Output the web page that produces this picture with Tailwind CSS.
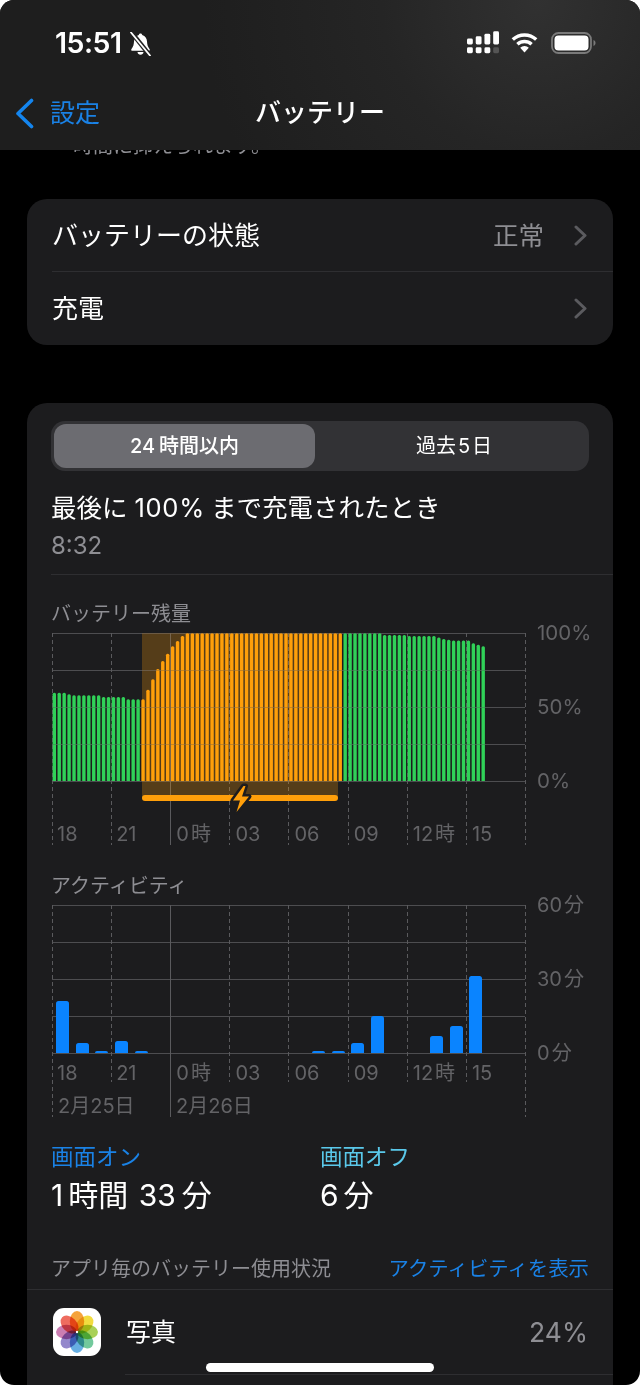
<!DOCTYPE html>
<html lang="ja">
<head>
    <meta charset="UTF-8">
    <meta name="viewport" content="width=device-width, initial-scale=1.0">
    <title>バッテリー</title>
    <script src="https://cdn.jsdelivr.net/npm/@tailwindcss/browser@4"></script>
</head>
<body class="bg-white">
<div class="relative h-[1385px] w-[640px] overflow-hidden rounded-[14px] bg-black text-white font-['Inter','Noto_Sans_CJK_JP',sans-serif]">

    <!-- ステータスバーとナビ -->
    <header class="h-[150px] bg-[radial-gradient(circle_at_84%_0%,#313131_0%,#252525_28%,#1e1e1e_60%,#1e1e1e_100%)]">
        <div class="flex h-[86px] items-start justify-between pt-[26px] pl-[55px] pr-[44px]">
            <div class="flex items-center gap-[7px]">
                <span class="text-[28.500px] leading-[34px] font-semibold tracking-[-0.5px]">15:51</span>
                <svg width="23" height="24" viewBox="0 0 23 24" class="mt-[1px]">
                    <path d="M11.5 1.5c1 0 1.6.7 1.7 1.5 3.2.8 4.6 3.4 4.8 6.6.2 3.4.8 5.300 2.500 7.400.6.800.2 1.800-.9 1.800H3.400c-1.100 0-1.500-1-.9-1.800 1.700-2.100 2.300-4 2.500-7.400.2-3.200 1.600-5.800 4.800-6.600.1-.8.700-1.500 1.700-1.500z" fill="#fff"/>
                    <path d="M8.500 20h6c-.2 1.700-1.400 2.800-3 2.800s-2.800-1.100-3-2.800z" fill="#fff"/>
                    <path d="M3 1l17.500 22" stroke="#232323" stroke-width="4.500"/>
                    <path d="M2 .5l19 23" stroke="#fff" stroke-width="1.800" stroke-linecap="round"/>
                </svg>
            </div>
            <div class="flex items-center pt-[5px]">
                <svg width="32" height="23" viewBox="0 0 33 23" class="mr-[12px]">
                    <g fill="#fff">
                        <rect x="0" y="7.500" width="6" height="6" rx="1.500"/>
                        <rect x="9" y="5" width="6" height="8.500" rx="1.500"/>
                        <rect x="18" y="2.500" width="6" height="11" rx="1.500"/>
                        <rect x="27" y="0" width="6" height="13.500" rx="1.500"/>
                        <rect x="0" y="16.500" width="6" height="6" rx="1.500"/>
                        <rect x="9" y="16.500" width="6" height="6" rx="1.500"/>
                        <rect x="18" y="16.500" width="6" height="6" rx="1.500"/>
                    </g>
                    <rect x="27" y="16.500" width="6" height="6" rx="1.500" fill="#555"/>
                </svg>
                <svg width="27" height="21" viewBox="0 0 27 21" class="mr-[13px]">
                    <path d="M1.800 7.600A17 17 0 0 1 25.200 7.600" fill="none" stroke="#fff" stroke-width="3.400"/>
                    <path d="M6.400 12.200A10.500 10.500 0 0 1 20.600 12.200" fill="none" stroke="#fff" stroke-width="3.400"/>
                    <path d="M13.500 20.500L9.200 15.800A6 6 0 0 1 17.800 15.800Z" fill="#fff"/>
                </svg>
                <svg width="45" height="22" viewBox="0 0 45 22">
                    <rect x="1" y="1" width="39" height="20" rx="6.500" fill="none" stroke="#7a7a7a" stroke-width="1.800"/>
                    <rect x="3.500" y="3.500" width="34" height="15" rx="4" fill="#fff"/>
                    <path d="M42.500 8v6c1.200-.4 2-1.600 2-3s-.8-2.600-2-3z" fill="#7a7a7a"/>
                </svg>
            </div>
        </div>
        <div class="relative flex h-[54px] items-center justify-center">
            <div class="absolute left-[15px] top-[11px] flex items-center gap-[16px]">
                <svg width="19" height="31" viewBox="0 0 19 31">
                    <path d="M16.500 2.500L3 15.500l13.500 13" fill="none" stroke="#1485ee" stroke-width="3.600" stroke-linecap="round" stroke-linejoin="round"/>
                </svg>
                <span class="text-[25px] leading-[32px] text-[#1a82e6]">設定</span>
            </div>
            <h1 class="text-[26px] leading-[34px] font-medium">バッテリー</h1>
        </div>
    </header>

    <main class="px-[27px]">
        <div class="flex h-[6px] items-end overflow-hidden pl-[46px]">
            <p class="text-[20px] leading-[20px] whitespace-nowrap text-[#8e8e93]">時間に抑えられます。</p>
        </div>

        <!-- バッテリーの状態 -->
        <section class="mt-[43px] rounded-[20px] bg-[#1c1c1e] pl-[25px]">
            <div class="flex h-[72px] items-center justify-between pr-[26px] pt-[2px]">
                <span class="text-[26px] leading-[36px]">バッテリーの状態</span>
                <div class="flex items-center gap-[30px]">
                    <span class="text-[25.500px] leading-[36px] text-[#8e8e93]">正常</span>
                    <svg width="13" height="21" viewBox="0 0 13 21" class="-mt-[2px]"><path d="M2 2l9 8.500-9 8.500" fill="none" stroke="#5b5b5f" stroke-width="3" stroke-linecap="round" stroke-linejoin="round"/></svg>
                </div>
            </div>
            <div class="flex h-[74px] items-center justify-between border-t border-[#2e2e31] pr-[26px]">
                <span class="text-[26px] leading-[36px] pt-[1px]">充電</span>
                <svg width="13" height="21" viewBox="0 0 13 21"><path d="M2 2l9 8.500-9 8.500" fill="none" stroke="#5b5b5f" stroke-width="3" stroke-linecap="round" stroke-linejoin="round"/></svg>
            </div>
        </section>

        <!-- グラフ -->
        <section class="mt-[58px] rounded-t-[20px] bg-[#1c1c1e] px-[24px] pt-[18px] h-[1000px]">
            <div class="flex h-[50px] items-center rounded-[14px] bg-[#323235] p-[3px]">
                <div class="flex h-[44px] w-[261px] items-center justify-center rounded-[12px] bg-[#6c6c71] text-[20px] font-medium"><span>24<span class="ml-[4px]">時間以内</span></span></div>
                <div class="flex h-[44px] flex-1 items-center justify-center pl-[7px] text-[20px]"><span>過去<span class="mx-[2px]">5</span>日</span></div>
            </div>

            <p class="mt-[19px] h-[36px] text-[25.500px] leading-[36px] whitespace-nowrap">最後に<span class="ml-[7px] mr-[6px] tracking-[0.7px]">100%</span>まで充電されたとき</p>
            <p class="mt-[2px] h-[34px] text-[24px] leading-[36px] text-[#8e8e93]">8:32</p>
            <div class="mt-[12px] -mr-[24px] border-t border-[#2e2e31]"></div>

            <p class="mt-[24px] h-[28px] text-[20px] leading-[30px] text-[#8e8e93]">バッテリー残量</p>
            <div class="relative mt-[6px] ml-[1px] w-[474px]">
                <svg class="grid-lines absolute top-0 left-0" data-height="212" width="474" height="212"></svg>
                <div class="absolute left-[90px] top-0 h-[165px] w-[196px] bg-[#ff9f0a]/25"></div>
                <svg id="batteryBars" class="relative block" width="474" height="148"></svg>
                <svg class="grid-lines absolute top-0 left-0 opacity-30" data-height="148" width="474" height="148"></svg>
                <div class="absolute left-[90px] top-[162px] h-[6px] w-[196px] rounded-[3px] bg-[#ff9f0a]"></div>
                <svg class="absolute left-[176px] top-[150px]" width="26" height="32" viewBox="0 0 26 32">
                    <path d="M15.500 3L5 17.500h7L8.500 29 21 13.500h-7L17.500 3z" fill="#ff9f0a" stroke="#1c1c1e" stroke-width="5" stroke-linejoin="round" paint-order="stroke"/>
                </svg>
                <div class="absolute left-[485px] top-0 flex h-[148px] flex-col justify-between text-[20.500px] whitespace-nowrap text-[#636366]">
                    <span class="flex h-0 items-center">100%</span>
                    <span class="flex h-0 items-center">50%</span>
                    <span class="flex h-0 items-center">0%</span>
                </div>
                <div class="relative mt-[39px] grid h-[28px] w-[473px] grid-cols-8 text-[20px] leading-[28px] text-[#636366]">
                    <span class="pl-[5px]">18</span><span class="pl-[5px]">21</span><span class="pl-[6px]">0<span class="ml-[2px]">時</span></span><span class="pl-[6px]">03</span><span class="pl-[6px]">06</span><span class="pl-[6px]">09</span><span class="pl-[6px] whitespace-nowrap">12<span class="ml-[2px]">時</span></span><span class="pl-[6px]">15</span>
                </div>
            </div>

            <p class="mt-[23px] h-[28px] text-[20px] leading-[30px] text-[#8e8e93]">アクティビティ</p>
            <div class="relative mt-[6px] ml-[1px] w-[474px]">
                <svg class="grid-lines absolute top-0 left-0" data-height="212" data-long="1" width="474" height="212"></svg>
                <div class="relative flex h-[148px] items-end gap-[6.700px] pl-[4px]" id="activityBars"></div>
                <div class="absolute left-[485px] top-0 flex h-[148px] flex-col justify-between text-[20px] whitespace-nowrap text-[#636366]">
                    <span class="flex h-0 items-center">60<span class="ml-[2px]">分</span></span>
                    <span class="flex h-0 items-center">30<span class="ml-[2px]">分</span></span>
                    <span class="flex h-0 items-center">0<span class="ml-[2px]">分</span></span>
                </div>
                <div class="relative mt-[6px] grid h-[28px] w-[473px] grid-cols-8 text-[20px] leading-[28px] text-[#636366]">
                    <span class="pl-[5px]">18</span><span class="pl-[5px]">21</span><span class="pl-[6px]">0<span class="ml-[2px]">時</span></span><span class="pl-[6px]">03</span><span class="pl-[6px]">06</span><span class="pl-[6px]">09</span><span class="pl-[6px] whitespace-nowrap">12<span class="ml-[2px]">時</span></span><span class="pl-[6px]">15</span>
                </div>
                <div class="relative mt-[5px] flex h-[28px] text-[20px] leading-[28px] text-[#636366]">
                    <span class="w-[118px] pl-[6px]">2月25日</span><span class="pl-[6px]">2月26日</span>
                </div>
            </div>

            <!-- 画面オン/オフ -->
            <div class="mt-[21px] flex">
                <div class="w-[269px]">
                    <p class="h-[32px] text-[22.500px] leading-[32px] text-[#1a82e6]">画面オン</p>
                    <p class="mt-[2px] h-[40px] text-[30px] leading-[40px] whitespace-nowrap">1<span class="ml-[5px]">時間</span> <span class="ml-[2px] mr-[6px]">33</span>分</p>
                </div>
                <div>
                    <p class="h-[32px] text-[22.500px] leading-[32px] text-[#5ac8ea]">画面オフ</p>
                    <p class="mt-[2px] h-[40px] text-[30px] leading-[40px] whitespace-nowrap">6<span class="ml-[5px]">分</span></p>
                </div>
            </div>

            <div class="mt-[39px] flex h-[28px] items-center justify-between pt-[2px] text-[20px] leading-[28px]">
                <span class="text-[#8e8e93]">アプリ毎のバッテリー使用状況</span>
                <span class="text-[20.400px] text-[#1a82e6]">アクティビティを表示</span>
            </div>
            <div class="mt-[7px] -mx-[24px] border-t border-[#2e2e31]"></div>

            <div class="flex h-[84px] items-center">
                <div class="ml-[2px] flex h-[48px] w-[48px] flex-none items-center justify-center rounded-[11px] bg-white">
                    <svg width="42" height="42" viewBox="0 0 42 42">
                        <g class="isolate">
                            <ellipse cx="21" cy="10.500" rx="7.200" ry="10.500" fill="#f5a33b" class="mix-blend-multiply"/>
                            <ellipse cx="21" cy="10.500" rx="7.200" ry="10.500" fill="#f2dc3f" transform="rotate(45 21 21)" class="mix-blend-multiply"/>
                            <ellipse cx="21" cy="10.500" rx="7.200" ry="10.500" fill="#a9d158" transform="rotate(90 21 21)" class="mix-blend-multiply"/>
                            <ellipse cx="21" cy="10.500" rx="7.200" ry="10.500" fill="#72c99c" transform="rotate(135 21 21)" class="mix-blend-multiply"/>
                            <ellipse cx="21" cy="10.500" rx="7.200" ry="10.500" fill="#66aee2" transform="rotate(180 21 21)" class="mix-blend-multiply"/>
                            <ellipse cx="21" cy="10.500" rx="7.200" ry="10.500" fill="#9488cb" transform="rotate(225 21 21)" class="mix-blend-multiply"/>
                            <ellipse cx="21" cy="10.500" rx="7.200" ry="10.500" fill="#cb7eb2" transform="rotate(270 21 21)" class="mix-blend-multiply"/>
                            <ellipse cx="21" cy="10.500" rx="7.200" ry="10.500" fill="#ee6c5f" transform="rotate(315 21 21)" class="mix-blend-multiply"/>
                        </g>
                        <circle cx="21" cy="21" r="1.200" fill="#fff"/>
                    </svg>
                </div>
                <span class="ml-[25px] text-[25px] leading-[36px]">写真</span>
                <span class="ml-auto pr-[1px] text-[26.500px] leading-[36px] text-[#8e8e93]">24%</span>
            </div>
            <div class="ml-[74px] -mr-[24px] border-t border-[#2e2e31]"></div>
        </section>
    </main>

    <!-- ホームインジケータ -->
    <div class="absolute left-[206px] top-[1363px] h-[9px] w-[228px] rounded-full bg-white"></div>
</div>

<script>
    // グリッド線
    function drawGrid(svg) {
        const height = Number(svg.dataset.height);
        const long = svg.dataset.long === '1';
        let html = '';
        for (let i = 0; i < 5; i++) {
            const y = i * 37 + 0.5;
            html += `<line x1="0" x2="473" y1="${y}" y2="${y}" stroke="#4d4d50" stroke-width="1"/>`;
        }
        for (let i = 0; i <= 8; i++) {
            const x = Math.round(i * 59.1) + 0.5;
            const full = i === 0 || i === 2 || i === 8;
            const y2 = long && !full ? 177 : height;
            const dash = i === 2 ? '' : 'stroke-dasharray="4 3"';
            html += `<line x1="${x}" x2="${x}" y1="0" y2="${y2}" stroke="#5a5a5d" stroke-width="1" ${dash}/>`;
        }
        svg.innerHTML = html;
    }
    document.querySelectorAll('.grid-lines').forEach(drawGrid);

    // バッテリー残量
    const green = [59.7, 59.7, 59.7, 58.6, 57.9, 57.9, 57.9, 57.9, 57.9, 57.9, 56.8, 56.8, 56.8, 56.8, 56.8, 55.2, 55.2, 55.2];
    const orange = [55.2, 61.7, 68.7, 75.7, 81, 86, 91, 94.6, 98];
    while (orange.length < 41) orange.push(100);
    const greenEnd = [100, 100, 100, 100, 100, 100, 100, 100, 98.7, 98.7, 98.7, 98.7, 98.7, 98, 98, 98, 98, 98, 98, 97, 96, 95.5, 95, 95, 95, 95, 93, 92, 91];
    const values = green.map(v => [v, '#30d158'])
        .concat(orange.map(v => [v, '#ff9f0a']))
        .concat(greenEnd.map(v => [v, '#30d158']));
    document.getElementById('batteryBars').innerHTML = values.map(([v, color], i) => {
        const x = 0.6 + i * 4.93;
        const y = 148 - v * 1.48;
        return `<path d="M${x} 148V${y + 1.5}Q${x} ${y} ${x + 1.5} ${y}H${x + 1.9}Q${x + 3.4} ${y} ${x + 3.4} ${y + 1.5}V148Z" fill="${color}"/>`;
    }).join('');

    // アクティビティ
    const activity = [51.7, 10, 2.5, 12.3, 2.5, 0, 0, 0, 0, 0, 0, 0, 0, 2.5, 2.5, 10, 37, 0, 0, 17, 27, 76.7];
    const activityBars = document.getElementById('activityBars');
    activity.forEach(v => {
        const bar = document.createElement('div');
        bar.className = 'w-[13px] flex-none rounded-t-[2.500px] bg-[#0a84ff]';
        bar.style.height = v + 'px';
        activityBars.appendChild(bar);
    });
</script>
</body>
</html>
